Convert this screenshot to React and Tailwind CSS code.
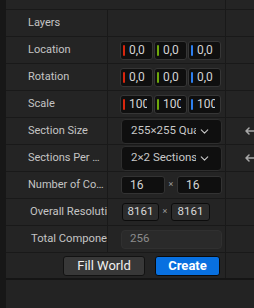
import { ChevronDown } from 'lucide-react';

const line = 'border-[#191919]';

function ResetIcon() {
    return (
        <svg width="14" height="12" viewBox="0 0 14 12" fill="none" stroke="#a8a8a8" strokeWidth="1.5" strokeLinecap="round" strokeLinejoin="round">
            <path d="M4 3 L1 6 L4 9 M1 6 H10 M10 3 V9" />
        </svg>
    );
}

function Row({ label, children, reset, labelClass = 'pl-[22px]', clip }) {
    return (
        <div className={`flex h-[27px] border-b ${line}`}>
            <div className={`w-[102px] shrink-0 border-r ${line} flex items-center pr-[2px] overflow-hidden ${labelClass}`}>
                <span className={`${clip ? 'whitespace-nowrap text-[11.2px]' : 'truncate text-[11px]'} text-[#c4c4c4]`}>{label}</span>
            </div>
            <div className={`w-[118px] shrink-0 border-r ${line} flex items-center pl-[13px]`}>
                {children}
            </div>
            <div className="flex-1 flex items-center pl-[19px] overflow-hidden">
                {reset && <ResetIcon />}
            </div>
        </div>
    );
}

function AxisBox({ color, value }) {
    return (
        <div className="relative w-[33px] h-[19px] rounded-[3px] bg-[#0f0f0f] border border-[#363636] flex items-center">
            <div className={`absolute left-[2px] top-[3px] w-[2px] h-[11px] rounded-[1px] ${color}`} />
            <div className="ml-[8px] w-[18px] overflow-hidden whitespace-nowrap text-[12px] text-[#d4d4d4]">{value}</div>
        </div>
    );
}

function Vector({ value }) {
    return (
        <div className="flex gap-[1px] -ml-[1px]">
            <AxisBox color="bg-[#d8260e]" value={value} />
            <AxisBox color="bg-[#6ea80c]" value={value} />
            <AxisBox color="bg-[#2d7ff0]" value={value} />
        </div>
    );
}

function Dropdown({ text }) {
    return (
        <div className="w-[101px] h-[25px] rounded-[4px] bg-[#0f0f0f] border border-[#2e2e2e] flex items-center pl-[9px] pr-[10px] gap-[2px]">
            <span className="flex-1 overflow-hidden whitespace-nowrap text-[11.5px] text-[#c8c8c8]">{text}</span>
            <ChevronDown size={13} strokeWidth={2} className="text-[#c8c8c8] shrink-0" />
        </div>
    );
}

function NumBox({ value, w }) {
    return (
        <div className={`${w} h-[18px] rounded-[3px] bg-[#0f0f0f] border border-[#333333] flex items-center pl-[8px]`}>
            <span className="text-[12px] text-[#d4d4d4]">{value}</span>
        </div>
    );
}

function ResBox({ w }) {
    return (
        <div className={`${w} h-[18px] rounded-[3px] bg-[#2c2c2c] border border-[#0c0c0c] flex items-center justify-center`}>
            <span className="text-[11.5px] text-[#d8d8d8]">8161</span>
        </div>
    );
}

export default function App() {
    return (
        <div className="w-[254px] h-[308px] flex bg-[#242424] font-['Roboto',sans-serif] overflow-hidden">
            <div className="w-[6px] shrink-0 bg-[#171717]" />
            <div className="flex-1 flex flex-col">
                <div className={`flex h-[10px] border-b ${line}`}>
                    <div className={`w-[220px] border-r ${line}`} />
                </div>

                <Row label="Layers" />
                <Row label="Location"><Vector value="0,0" /></Row>
                <Row label="Rotation"><Vector value="0,0" /></Row>
                <Row label="Scale"><Vector value="100,0" /></Row>
                <Row label="Section Size" reset><Dropdown text="255×255 Quads" /></Row>
                <Row label="Sections Per Component" reset><Dropdown text="2×2 Sections" /></Row>
                <Row label="Number of Components">
                    <div className="flex items-center">
                        <NumBox value="16" w="w-[44px]" />
                        <span className="w-[12px] text-center text-[9px] text-[#9a9a9a]">×</span>
                        <NumBox value="16" w="w-[45px]" />
                    </div>
                </Row>
                <Row label="Overall Resolution" labelClass="pl-[24px]" clip>
                    <div className="flex items-center ml-[1px]">
                        <ResBox w="w-[37px]" />
                        <span className="w-[12px] text-center text-[9px] text-[#9a9a9a]">×</span>
                        <ResBox w="w-[39px]" />
                    </div>
                </Row>
                <Row label="Total Components" labelClass="pl-[25px]" clip>
                    <div className="w-[101px] h-[19px] rounded-[4px] bg-[#2a2a2a] border border-[#303030] flex items-center pl-[8px]">
                        <span className="text-[11.5px] text-[#8c8c8c]">256</span>
                    </div>
                </Row>

                <div className="flex h-[27px] border-b-2 border-[#151515]">
                    <div className={`w-[220px] shrink-0 border-r ${line} flex items-center pl-[57px] gap-[10px]`}>
                        <button className="w-[82px] h-[20px] rounded-[3px] bg-[#383838] border border-[#121212] text-[13px] text-[#f0f0f0] leading-none">
                            Fill World
                        </button>
                        <button className="w-[65px] h-[20px] rounded-[3px] bg-[#0870e0] border border-[#0a0a0a] text-[13px] font-bold text-white leading-none">
                            Create
                        </button>
                    </div>
                </div>
                <div className="flex-1 bg-[#232323]" />
            </div>
        </div>
    );
}
